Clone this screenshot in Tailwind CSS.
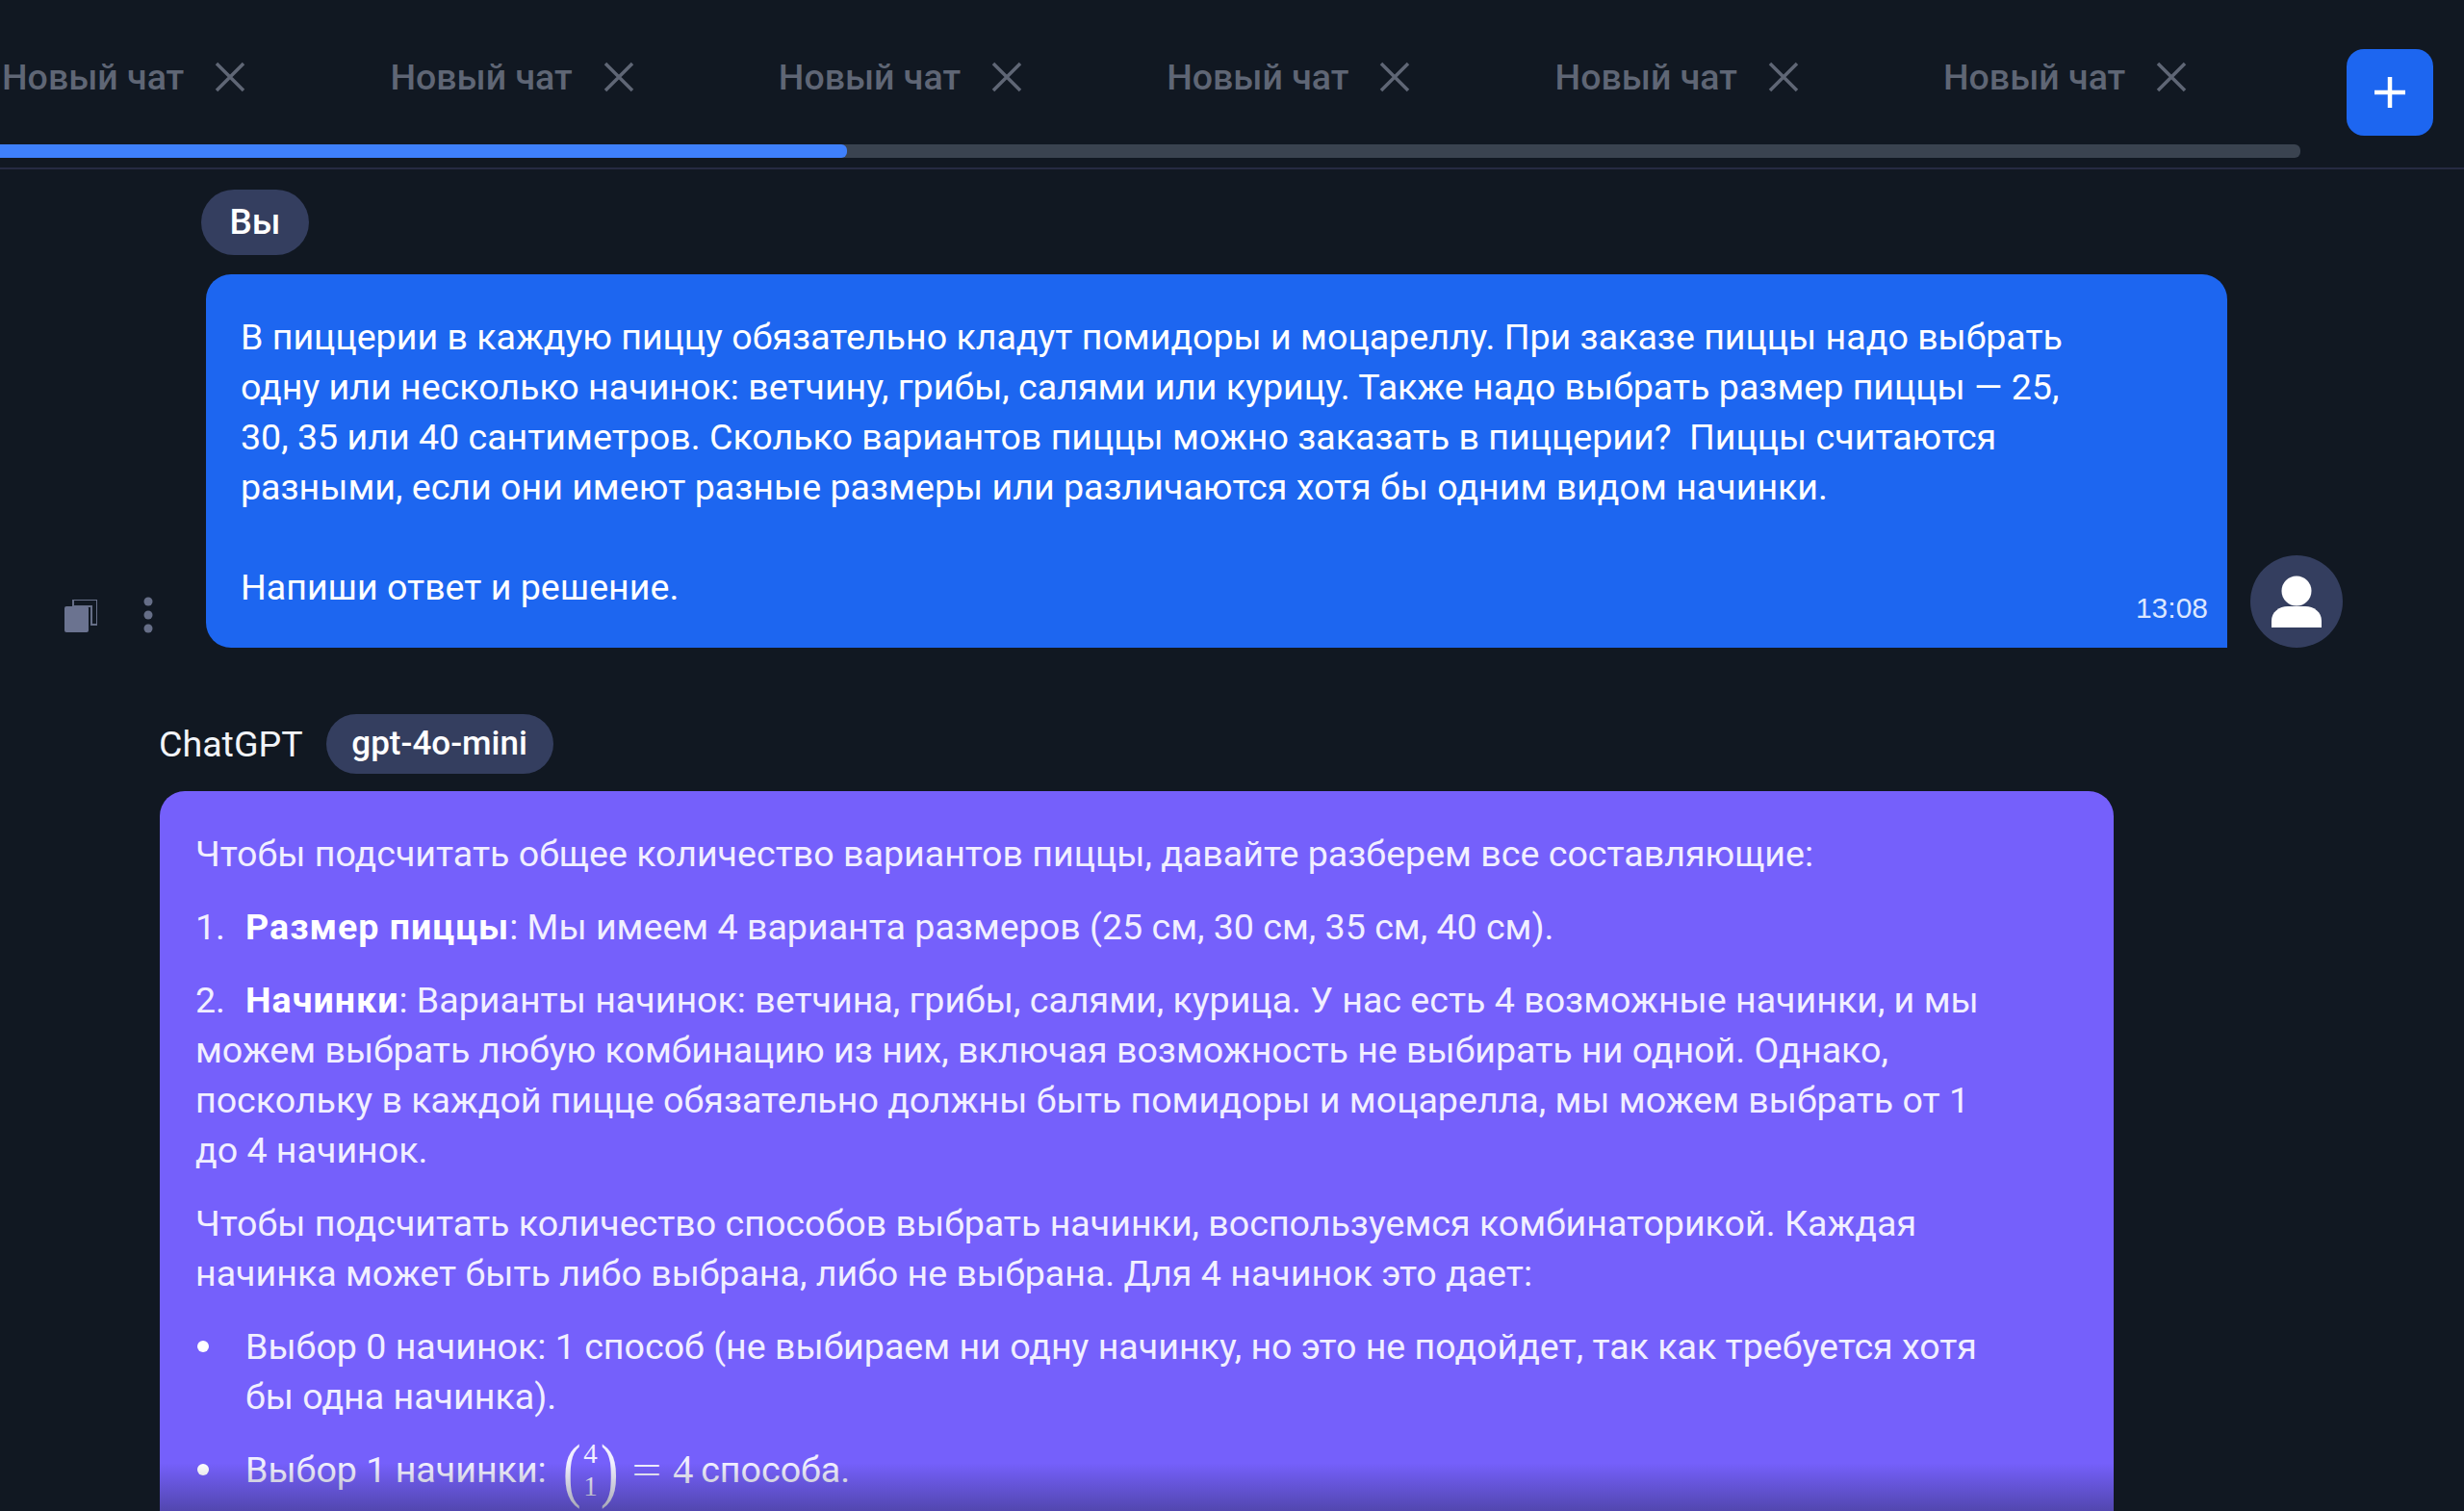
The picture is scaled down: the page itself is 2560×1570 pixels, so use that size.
<!DOCTYPE html>
<html lang="ru"><head><meta charset="utf-8"><script src="https://cdn.jsdelivr.net/npm/@tailwindcss/browser@4"></script></head>
<body class="m-0 bg-[#111822]">
<div class="relative flex h-[1570px] w-[2560px] flex-col overflow-hidden bg-[#111822] font-['Roboto',sans-serif] text-[37.6px] leading-[52px] text-[#eef0ff]">
  <header class="flex h-[176px] shrink-0 border-b-2 border-[#262b42]">
    <div class="flex w-[2390px] flex-col">
      <nav class="flex h-[150px] pl-[2px] pt-[20px] text-[#5f6675] font-medium text-[37.5px] leading-[52px]">
        <div class="flex h-[120px] w-[403.4px] items-center gap-[32px]"><span>Новый чат</span><svg class="size-[32px]" viewBox="0 0 32 32" fill="none" stroke="#5f6675" stroke-width="3.5"><path d="M2 2 30 30M30 2 2 30"/></svg></div>
        <div class="flex h-[120px] w-[403.4px] items-center gap-[32px]"><span>Новый чат</span><svg class="size-[32px]" viewBox="0 0 32 32" fill="none" stroke="#5f6675" stroke-width="3.5"><path d="M2 2 30 30M30 2 2 30"/></svg></div>
        <div class="flex h-[120px] w-[403.4px] items-center gap-[32px]"><span>Новый чат</span><svg class="size-[32px]" viewBox="0 0 32 32" fill="none" stroke="#5f6675" stroke-width="3.5"><path d="M2 2 30 30M30 2 2 30"/></svg></div>
        <div class="flex h-[120px] w-[403.4px] items-center gap-[32px]"><span>Новый чат</span><svg class="size-[32px]" viewBox="0 0 32 32" fill="none" stroke="#5f6675" stroke-width="3.5"><path d="M2 2 30 30M30 2 2 30"/></svg></div>
        <div class="flex h-[120px] w-[403.4px] items-center gap-[32px]"><span>Новый чат</span><svg class="size-[32px]" viewBox="0 0 32 32" fill="none" stroke="#5f6675" stroke-width="3.5"><path d="M2 2 30 30M30 2 2 30"/></svg></div>
        <div class="flex h-[120px] w-[371px] items-center gap-[32px]"><span>Новый чат</span><svg class="size-[32px]" viewBox="0 0 32 32" fill="none" stroke="#5f6675" stroke-width="3.5"><path d="M2 2 30 30M30 2 2 30"/></svg></div>
      </nav>
      <div class="h-[14px] w-full overflow-hidden rounded-r-[6px] bg-[#3a4350]"><div class="h-full w-[880px] rounded-r-[6px] bg-[#3f80fb]"></div></div>
    </div>
    <button class="ml-[48px] mt-[51px] flex h-[90px] w-[90px] items-center justify-center rounded-[18px] bg-[#1d66f0]"><svg class="size-[32px]" viewBox="0 0 32 32" fill="none" stroke="#fff" stroke-width="4.5"><path d="M16 0V32M0 16H32"/></svg></button>
  </header>
  <main class="flex-1">
    <div class="ml-[209px] mt-[21px] flex h-[68px] w-[112px] items-center justify-center rounded-[34px] bg-[#343e5f] text-[37px] font-medium text-white">Вы</div>
    <div class="mt-[20px] flex items-end">
      <div class="mb-[13px] ml-[67px] flex w-[147px] items-center">
        <svg class="h-[34px] w-[34px]" viewBox="0 0 34 34"><path d="M9 0H34V26H28V7H9Z" fill="none" stroke="#666e87" stroke-width="2"/><rect x="0" y="7" width="25" height="27" rx="2" fill="#6b7390"/></svg>
        <svg class="ml-[48px] h-[40px] w-[10px]" viewBox="0 0 10 40" fill="#666e87"><circle cx="5" cy="5" r="4.5"/><circle cx="5" cy="19" r="4.5"/><circle cx="5" cy="33" r="4.5"/></svg>
      </div>
      <div class="relative h-[388px] w-[2100px] rounded-t-[26px] rounded-bl-[26px] bg-[#1d66f0] px-[36px] pt-[39px] text-white">
        <p>В пиццерии в каждую пиццу обязательно кладут помидоры и моцареллу. При заказе пиццы надо выбрать<br>одну или несколько начинок: ветчину, грибы, салями или курицу. Также надо выбрать размер пиццы — 25,<br>30, 35 или 40 сантиметров. Сколько вариантов пиццы можно заказать в пиццерии?&nbsp; Пиццы считаются<br>разными, если они имеют разные размеры или различаются хотя бы одним видом начинки.<br><br>Напиши ответ и решение.</p>
        <span class="absolute bottom-[24px] right-[20px] font-['Liberation_Sans',sans-serif] text-[30px] leading-[34px] text-[#dbe7ff]">13:08</span>
      </div>
      <div class="ml-[24px] flex size-[96px] items-center justify-center rounded-full bg-[#343e5f]">
        <svg class="h-[54px] w-[54px]" viewBox="0 0 54 54" fill="#fff"><circle cx="27" cy="16" r="15.5"/><path d="M1 54V47C1 38 9 32 18 32H36C45 32 53 38 53 47V54Z"/></svg>
      </div>
    </div>
    <div class="ml-[165px] mt-[69px] flex items-center">
      <span class="text-[37.6px] text-[#f2f4f8]">ChatGPT</span>
      <span class="ml-[24px] flex h-[62px] w-[236px] items-center justify-center rounded-[31px] bg-[#343e5f] text-[35px] font-medium text-white">gpt-4o-mini</span>
    </div>
    <article class="ml-[166px] mt-[18px] h-[800px] w-[2030px] rounded-t-[26px] bg-[#7560fb] px-[37px] pt-[39px] text-[#f1efff]">
      <p>Чтобы подсчитать общее количество вариантов пиццы, давайте разберем все составляющие:</p>
      <ol class="mt-[24px] flex flex-col gap-[24px]">
        <li class="flex"><span class="w-[52px] shrink-0">1.</span><span><strong class="font-bold tracking-[1px] text-white">Размер пиццы</strong>: Мы имеем 4 варианта размеров (25 см, 30 см, 35 см, 40 см).</span></li>
        <li><span class="inline-block w-[52px]">2.</span><strong class="font-bold tracking-[1px] text-white">Начинки</strong>: Варианты начинок: ветчина, грибы, салями, курица. У нас есть 4 возможные начинки, и мы<br>можем выбрать любую комбинацию из них, включая возможность не выбирать ни одной. Однако,<br>поскольку в каждой пицце обязательно должны быть помидоры и моцарелла, мы можем выбрать от 1<br>до 4 начинок.</li>
      </ol>
      <p class="mt-[24px]">Чтобы подсчитать количество способов выбрать начинки, воспользуемся комбинаторикой. Каждая<br>начинка может быть либо выбрана, либо не выбрана. Для 4 начинок это дает:</p>
      <ul class="mt-[24px] flex flex-col gap-[24px]">
        <li class="flex"><span class="flex h-[52px] w-[52px] shrink-0 items-center"><span class="ml-[2px] size-[12px] rounded-full bg-white"></span></span><span>Выбор 0 начинок: 1 способ (не выбираем ни одну начинку, но это не подойдет, так как требуется хотя<br>бы одна начинка).</span></li>
        <li class="flex h-[52px]"><span class="flex h-[52px] w-[52px] shrink-0 items-center"><span class="ml-[2px] size-[12px] rounded-full bg-white"></span></span><span class="flex h-[52px] items-center">Выбор 1 начинки:
          <span class="ml-[14px] flex h-[52px] items-center font-['Liberation_Serif',serif]">
            <span class="text-[74px] font-thin leading-[52px] scale-x-75">(</span>
            <span class="flex flex-col text-center text-[29px] leading-[34px]"><span>4</span><span>1</span></span>
            <span class="text-[74px] font-thin leading-[52px] scale-x-75">)</span>
            <span class="ml-[14px] inline-block scale-x-[1.3] text-[42px]">=</span>
            <span class="ml-[16px] text-[42px]">4</span>
          </span>
          <span class="ml-[8px]">способа.</span></span></li>
      </ul>
    </article>
  </main>
  <div class="pointer-events-none absolute bottom-0 left-0 h-[50px] w-full bg-gradient-to-b from-[#111822]/0 to-[#111822]/35"></div>
</div>
</body></html>
